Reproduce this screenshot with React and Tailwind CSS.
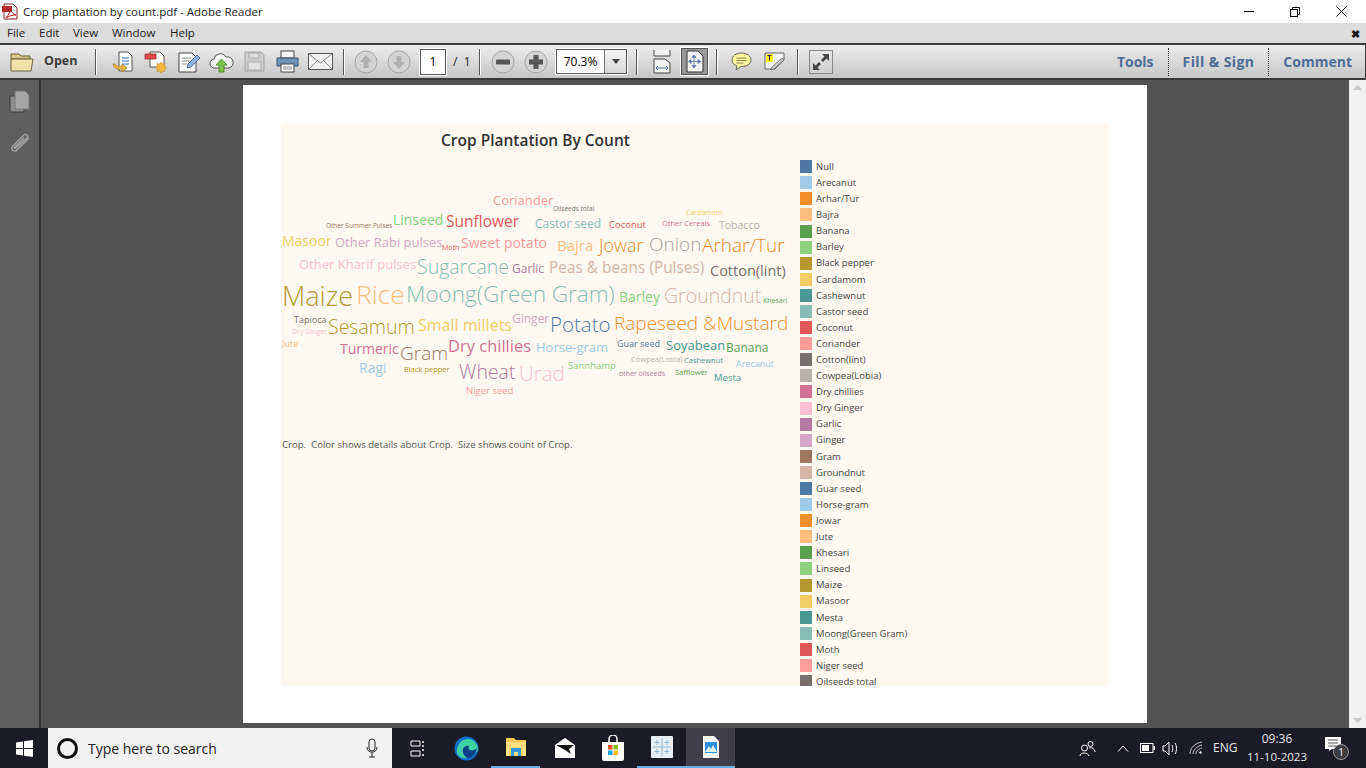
import React from 'react';

const legend = [
  ['Null', 'bg-[#4e79a7]'], ['Arecanut', 'bg-[#a0cbe8]'], ['Arhar/Tur', 'bg-[#f28e2b]'], ['Bajra', 'bg-[#ffbe7d]'],
  ['Banana', 'bg-[#59a14f]'], ['Barley', 'bg-[#8cd17d]'], ['Black pepper', 'bg-[#b6992d]'], ['Cardamom', 'bg-[#f1ce63]'],
  ['Cashewnut', 'bg-[#499894]'], ['Castor seed', 'bg-[#86bcb6]'], ['Coconut', 'bg-[#e15759]'], ['Coriander', 'bg-[#ff9d9a]'],
  ['Cotton(lint)', 'bg-[#79706e]'], ['Cowpea(Lobia)', 'bg-[#bab0ac]'], ['Dry chillies', 'bg-[#d37295]'], ['Dry Ginger', 'bg-[#fabfd2]'],
  ['Garlic', 'bg-[#b07aa1]'], ['Ginger', 'bg-[#d4a6c8]'], ['Gram', 'bg-[#9d7660]'], ['Groundnut', 'bg-[#d7b5a6]'],
  ['Guar seed', 'bg-[#4e79a7]'], ['Horse-gram', 'bg-[#a0cbe8]'], ['Jowar', 'bg-[#f28e2b]'], ['Jute', 'bg-[#ffbe7d]'],
  ['Khesari', 'bg-[#59a14f]'], ['Linseed', 'bg-[#8cd17d]'], ['Maize', 'bg-[#b6992d]'], ['Masoor', 'bg-[#f1ce63]'],
  ['Mesta', 'bg-[#499894]'], ['Moong(Green Gram)', 'bg-[#86bcb6]'], ['Moth', 'bg-[#e15759]'], ['Niger seed', 'bg-[#ff9d9a]'],
  ['Oilseeds total', 'bg-[#79706e]'],
];

const words = [
  ['Coriander', 'left-[212px] top-[10px] text-[13px] text-[#ff9d9a]'],
  ['Oilseeds total', 'left-[272px] top-[19px] text-[6.5px] text-[#79706e]'],
  ['Cardamom', 'left-[405px] top-[22px] text-[7px] text-[#f1ce63]'],
  ['Other Summer Pulses', 'left-[45px] top-[36px] text-[6.5px] text-[#9d7660]'],
  ['Linseed', 'left-[112px] top-[30px] text-[14px] text-[#8cd17d]'],
  ['Sunflower', 'left-[165px] top-[32px] text-[15.5px] text-[#e15759]'],
  ['Castor seed', 'left-[254px] top-[34px] text-[12px] text-[#86bcb6]'],
  ['Coconut', 'left-[328px] top-[35px] text-[9.5px] text-[#e15759]'],
  ['Other Cereals', 'left-[381px] top-[34px] text-[7.5px] text-[#d37295]'],
  ['Tobacco', 'left-[438px] top-[35px] text-[10.5px] text-[#bab0ac]'],
  ['Masoor', 'left-[1px] top-[51px] text-[14px] text-[#f1ce63]'],
  ['Other Rabi pulses', 'left-[54px] top-[52px] text-[13px] text-[#d4a6c8]'],
  ['Moth', 'left-[161px] top-[57px] text-[7px] text-[#e15759]'],
  ['Sweet potato', 'left-[180px] top-[53px] text-[14px] text-[#ff9d9a]'],
  ['Bajra', 'left-[276px] top-[55px] text-[15px] text-[#ffbe7d]'],
  ['Jowar', 'left-[318px] top-[55px] text-[18px] font-light text-[#f28e2b]'],
  ['Onion', 'left-[368px] top-[54px] text-[19px] font-light text-[#a8a09c]'],
  ['Arhar/Tur', 'left-[421px] top-[55px] text-[19px] font-light text-[#f28e2b]'],
  ['Other Kharif pulses', 'left-[18px] top-[74px] text-[13px] text-[#fabfd2]'],
  ['Sugarcane', 'left-[136px] top-[77px] text-[19.5px] font-light text-[#86bcb6]'],
  ['Garlic', 'left-[231px] top-[79px] text-[12px] text-[#b07aa1]'],
  ['Peas & beans (Pulses)', 'left-[268px] top-[78px] text-[15.4px] text-[#d7b5a6]'],
  ['Cotton(lint)', 'left-[429px] top-[81px] text-[14.5px] text-[#79706e]'],
  ['Maize', 'left-[1px] top-[105px] text-[27px] font-light text-[#b6992d]'],
  ['Rice', 'left-[75px] top-[104px] text-[26.5px] font-light text-[#ffbe7d]'],
  ['Moong(Green Gram)', 'left-[125px] top-[104px] text-[22.5px] font-light text-[#86bcb6]'],
  ['Barley', 'left-[338px] top-[107px] text-[14px] text-[#8cd17d]'],
  ['Groundnut', 'left-[383px] top-[106px] text-[19.5px] font-light text-[#d7b5a6]'],
  ['Khesari', 'left-[482px] top-[110px] text-[7px] text-[#59a14f]'],
  ['Tapioca', 'left-[13px] top-[129px] text-[9px] text-[#79706e]'],
  ['Sesamum', 'left-[47px] top-[137px] text-[19.5px] font-light text-[#b6992d]'],
  ['Small millets', 'left-[137px] top-[135px] text-[16px] text-[#f1ce63]'],
  ['Ginger', 'left-[231px] top-[129px] text-[12px] text-[#d4a6c8]'],
  ['Potato', 'left-[269px] top-[134px] text-[20.5px] font-light text-[#4e79a7]'],
  ['Rapeseed &Mustard', 'left-[333px] top-[133px] text-[19px] font-light text-[#f28e2b]'],
  ['Dry Ginger', 'left-[11px] top-[141px] text-[7px] text-[#fabfd2]'],
  ['Jute', 'left-[1px] top-[153px] text-[9px] text-[#ffbe7d]'],
  ['Turmeric', 'left-[59px] top-[159px] text-[14px] text-[#d37295]'],
  ['Gram', 'left-[119px] top-[163px] text-[19px] font-light text-[#9d7660]'],
  ['Dry chillies', 'left-[167px] top-[156px] text-[16.5px] text-[#d37295]'],
  ['Horse-gram', 'left-[255px] top-[157px] text-[13px] text-[#a0cbe8]'],
  ['Guar seed', 'left-[336px] top-[153px] text-[9px] text-[#4e79a7]'],
  ['Soyabean', 'left-[385px] top-[155px] text-[13px] text-[#499894]'],
  ['Banana', 'left-[445px] top-[158px] text-[12px] text-[#59a14f]'],
  ['Cowpea(Lobia)', 'left-[350px] top-[170px] text-[7.5px] text-[#bab0ac]'],
  ['Cashewnut', 'left-[403px] top-[171px] text-[7.5px] text-[#499894]'],
  ['Arecanut', 'left-[455px] top-[173px] text-[9px] text-[#a0cbe8]'],
  ['Ragi', 'left-[78px] top-[178px] text-[14px] text-[#a0cbe8]'],
  ['Black pepper', 'left-[123px] top-[180px] text-[7.5px] text-[#b6992d]'],
  ['Wheat', 'left-[178px] top-[182px] text-[19.5px] font-light text-[#b07aa1]'],
  ['Urad', 'left-[238px] top-[183px] text-[20.5px] font-light text-[#fabfd2]'],
  ['Sannhamp', 'left-[287px] top-[176px] text-[9.5px] text-[#8cd17d]'],
  ['other oilseeds', 'left-[338px] top-[183px] text-[7px] text-[#b07aa1]'],
  ['Safflower', 'left-[394px] top-[183px] text-[7.5px] text-[#59a14f]'],
  ['Mesta', 'left-[433px] top-[188px] text-[9.5px] text-[#499894]'],
  ['Niger seed', 'left-[185px] top-[201px] text-[9.5px] text-[#ff9d9a]'],
];

const Sep = ({ className }) => <div className={`w-[2px] h-[26px] bg-[#555] border-r border-white shrink-0 ${className || ''}`}></div>;

const Slot = ({ children }) => <div className="w-[33px] h-[26px] flex items-center justify-center shrink-0">{children}</div>;

const Folder = () => (
  <svg width="25" height="22" viewBox="0 0 25 22">
    <path d="M1 3h8l2 2h9v3H1z" fill="#d9c78e" stroke="#6d5f3a" />
    <path d="M1 20V8h22l-2 12z" fill="#f1e0a8" stroke="#6d5f3a" />
  </svg>
);

const DocBase = ({ children }) => (
  <svg width="24" height="24" viewBox="0 0 24 24">{children}</svg>
);

const CircleBtn = ({ children }) => (
  <svg width="24" height="24" viewBox="0 0 24 24">
    <circle cx="12" cy="12" r="11" fill="#d4d4d4" stroke="#a5a5a5" />
    {children}
  </svg>
);

const Toolbar = () => (
  <div className="h-[37px] shrink-0 flex items-center border-y-2 border-[#3a3a3a] border-r bg-gradient-to-b from-[#ededed] to-[#c6c6c6] text-[#333]">
    <div className="flex items-center w-[95px] pl-[10px] shrink-0">
      <Folder />
      <span className="ml-[9px] text-[12.5px] font-bold text-[#3c3c3c]">Open</span>
    </div>
    <Sep />
    <div className="flex ml-[9px]">
      <Slot>
        <DocBase>
          <path d="M8 2h9l4 4v15H8z" fill="#fff" stroke="#555" />
          <path d="M11 8h7M11 11h7M11 14h7" stroke="#2f6fc0" strokeWidth="1.2" />
          <path d="M2 14c1 5 5 6 9 5v3l5-4-5-4v2c-3 1-6 0-7-2z" fill="#eeb544" stroke="#a47a1d" strokeWidth=".7" />
        </DocBase>
      </Slot>
      <Slot>
        <DocBase>
          <path d="M6 2h10l4 4v11H6z" fill="#fff" stroke="#555" />
          <rect x="1" y="4" width="11" height="5" fill="#e04a4a" stroke="#9c2020" strokeWidth=".7" />
          <path d="M17 12l1.500 2 2.500-.5-.5 2.500 2 1.500-2 1.500.5 2.500-2.500-.5-1.500 2-1.500-2-2.500.5.5-2.500-2-1.500 2-1.500-.5-2.500 2.500.5z" fill="#f0b93a" stroke="#b7821a" strokeWidth=".5" />
        </DocBase>
      </Slot>
      <Slot>
        <DocBase>
          <path d="M2 3h13l4 4v15H2z" fill="#fff" stroke="#444" />
          <path d="M5 8h9M5 11h7M5 14h5" stroke="#888" />
          <path d="M10 18l1-4 9-9 3 3-9 9z" fill="#8db4dd" stroke="#41597a" strokeWidth=".8" />
        </DocBase>
      </Slot>
      <Slot>
        <svg width="25" height="22" viewBox="0 0 25 22">
          <path d="M6 17a4.500 4.500 0 0 1-1-9 6.500 6.500 0 0 1 12-2 5.500 5.500 0 0 1 3 11z" fill="#f4f4f4" stroke="#555" />
          <path d="M12.500 8l5.500 6h-3v7h-5v-7H7z" fill="#7cc24a" stroke="#3e7d22" strokeWidth=".8" />
        </svg>
      </Slot>
      <Slot>
        <svg width="21" height="21" viewBox="0 0 21 21">
          <path d="M1 1h16l3 3v16H1z" fill="#cfcfcf" stroke="#a2a2a2" />
          <rect x="5" y="2" width="10" height="5" fill="#dedede" stroke="#aaa" />
          <rect x="4" y="11" width="13" height="8" fill="#e2e2e2" stroke="#aaa" />
        </svg>
      </Slot>
      <Slot>
        <svg width="23" height="23" viewBox="0 0 23 23">
          <rect x="5" y="1" width="13" height="7" fill="#f5f5f5" stroke="#444" />
          <path d="M1 8h21v8H1z" fill="#6f93b8" stroke="#38506b" />
          <rect x="5" y="14" width="13" height="8" fill="#fff" stroke="#444" />
          <path d="M7 17h9M7 19h9" stroke="#888" />
        </svg>
      </Slot>
      <Slot>
        <svg width="25" height="17" viewBox="0 0 25 17">
          <rect x=".5" y=".5" width="24" height="16" fill="#f0f0f0" stroke="#555" />
          <path d="M1 1l11.500 9L24 1M1 16l8-8M24 16l-8-8" fill="none" stroke="#888" />
        </svg>
      </Slot>
    </div>
    <Sep className="ml-[6px]" />
    <div className="flex ml-[4px]">
      <Slot>
        <CircleBtn><path d="M12 5l6 7h-3.500v6h-5v-6H6z" fill="#b0b0b0" /></CircleBtn>
      </Slot>
      <Slot>
        <CircleBtn><path d="M12 19l6-7h-3.500V6h-5v6H6z" fill="#b0b0b0" /></CircleBtn>
      </Slot>
    </div>
    <div className="ml-[5px] w-[26px] h-[26px] border border-[#555] outline outline-1 outline-white bg-white flex items-center justify-center text-[12px] text-black shrink-0">1</div>
    <span className="ml-[7px] w-[26px] text-[12px] text-[#222] shrink-0 whitespace-pre">/  1</span>
    <Sep />
    <div className="flex ml-[5px]">
      <Slot>
        <CircleBtn><rect x="5" y="9.500" width="14" height="5" rx="1" fill="#555" /></CircleBtn>
      </Slot>
      <Slot>
        <CircleBtn><path d="M9.500 5h5v4.500H19v5h-4.500V19h-5v-4.500H5v-5h4.500z" fill="#555" /></CircleBtn>
      </Slot>
    </div>
    <div className="ml-[4px] w-[71px] h-[25px] flex border border-[#555] outline outline-1 outline-white shrink-0">
      <div className="w-[48px] bg-white flex items-center justify-center text-[12px] text-black border-r border-[#777]">70.3%</div>
      <div className="flex-1 bg-gradient-to-b from-[#f4f4f4] to-[#d6d6d6] flex items-center justify-center">
        <svg width="8" height="5" viewBox="0 0 8 5"><path d="M0 0h8L4 5z" fill="#444" /></svg>
      </div>
    </div>
    <Sep className="ml-[9px]" />
    <div className="flex ml-[7px] items-center">
      <Slot>
        <svg width="18" height="24" viewBox="0 0 18 24">
          <path d="M1 0v6h16V0" fill="#f2f2f2" stroke="#444" />
          <path d="M1 23V9h11l5 4v10z" fill="#f2f2f2" stroke="#444" />
          <path d="M3 18h12M3 18l2-2M3 18l2 2M15 18l-2-2M15 18l-2 2" stroke="#5a78ad" fill="none" />
        </svg>
      </Slot>
      <div className="w-[27px] h-[27px] ml-[3px] bg-[#999] border border-[#555] outline outline-1 outline-white flex items-center justify-center shrink-0">
        <svg width="18" height="23" viewBox="0 0 18 23">
          <path d="M1 1h11l5 5v16H1z" fill="#f4f4f4" stroke="#333" />
          <path d="M8 6v11M3 11.500h11M8 5l-2 2.500h4zM8 18l-2-2.500h4zM2.500 11.500L5 9.500v4zM14.500 11.500L12 9.500v4z" stroke="#5a78ad" fill="#5a78ad" strokeWidth=".8" />
        </svg>
      </div>
    </div>
    <Sep className="ml-[8px]" />
    <div className="flex ml-[7px]">
      <Slot>
        <svg width="21" height="20" viewBox="0 0 21 20">
          <path d="M10.500 1C5 1 1 4 1 8c0 3 2.500 5 5 6l-1 4 5-3.500h.5C16 14.500 20 12 20 8s-4-7-9.500-7z" fill="#fbf59c" stroke="#666" />
          <path d="M5.500 6h10M5.500 8.500h10M5.500 11h7" stroke="#8a8450" />
        </svg>
      </Slot>
      <Slot>
        <svg width="21" height="20" viewBox="0 0 21 20">
          <path d="M1 1h19v7L11 17H1z" fill="#f4f4f4" stroke="#666" />
          <rect x="2" y="2" width="7" height="8" fill="#f6f21a" />
          <path d="M3.500 3.500h4M5.500 3.500v5" stroke="#222" fill="none" />
          <path d="M7 18l1-3 10-9 2 2-10 9z" fill="#c7c7c7" stroke="#555" strokeWidth=".7" />
        </svg>
      </Slot>
    </div>
    <Sep className="ml-[6px]" />
    <div className="ml-[10px] w-[24px] h-[24px] bg-gradient-to-b from-[#e8e8e8] to-[#cfcfcf] border border-[#888] flex items-center justify-center shrink-0">
      <svg width="18" height="18" viewBox="0 0 18 18">
        <path d="M10 1h7v7l-2.500-2.500L11 9 9 7l3.500-3.500zM8 17H1v-7l2.500 2.500L7 9l2 2-3.500 3.500z" fill="#454545" />
      </svg>
    </div>
    <div className="ml-auto flex items-center font-bold text-[14px] text-[#4e6d96] pr-[13px]">
      <span>Tools</span>
      <div className="h-[28px] mx-[14px] border-l border-dotted border-[#333]"></div>
      <span className="tracking-[0.4px]">Fill &amp; Sign</span>
      <div className="h-[28px] mx-[14px] border-l border-dotted border-[#333]"></div>
      <span>Comment</span>
    </div>
  </div>
);

const Taskbar = () => (
  <div className="h-[40px] shrink-0 flex items-center bg-[#1b1a27] text-white">
    <div className="w-[48px] flex justify-center shrink-0">
      <svg width="17" height="17" viewBox="0 0 17 17">
        <path d="M0 2.500l7-1V8H0zM8 1.300L17 0v8H8zM0 9h7v6.500l-7-1zM8 9h9v8l-9-1.300z" fill="#fff" />
      </svg>
    </div>
    <div className="w-[344px] h-[40px] bg-[#f2f2f2] flex items-center text-[#222] shrink-0">
      <div className="ml-[9px] w-[21px] h-[21px] rounded-full border-[3px] border-[#111]"></div>
      <span className="ml-[10px] text-[14px]">Type here to search</span>
      <svg className="ml-auto mr-[14px]" width="12" height="20" viewBox="0 0 12 20" fill="none" stroke="#222">
        <rect x="3" y="1" width="6" height="12" rx="3" />
        <path d="M1 9c0 7 10 7 10 0M6 15v4M3 19h6" />
      </svg>
    </div>
    <div className="w-[50px] flex justify-center shrink-0">
      <svg width="15" height="17" viewBox="0 0 15 17" fill="none" stroke="#fff">
        <path d="M1 1h9v5H1zM1 11h9v5H1z" />
        <path d="M13 1v2M13 5v2M13 9v2M13 14v2" strokeWidth="1.500" />
      </svg>
    </div>
    <div className="flex items-stretch h-[40px]">
      <div className="w-[49px] flex items-center justify-center">
        <svg width="25" height="25" viewBox="0 0 25 25">
          <circle cx="12.500" cy="12.500" r="12" fill="#0f6fc6" />
          <path d="M3 17C2 8 9 2 15 3c6 1 9 6 9 10 0 3-3 4-6 4-3 0-5-2-4-4-4-1-6 5-1 9-5 1-9-2-10-5z" fill="#3fd2a3" />
          <path d="M9 13c1-3 4-4 6-3-1 1-1 3 1 4 3 1 5 0 7-2-1 5-4 9-9 10-4-2-6-5-5-9z" fill="#0b3f8a" />
        </svg>
      </div>
      <div className="w-[49px] flex items-center justify-center border-b-2 border-[#66aee8]">
        <svg width="22" height="22" viewBox="0 0 22 22">
          <path d="M1 2h8l2 2h10v16H1z" fill="#f4c94e" />
          <path d="M1 6h20v14H1z" fill="#ffdf7e" />
          <path d="M6 20v-8h10v8h-3v-4H9v4z" fill="#3a96dd" />
        </svg>
      </div>
      <div className="w-[49px] flex items-center justify-center">
        <svg width="22" height="22" viewBox="0 0 22 22">
          <path d="M1 8l10-7 10 7v13H1z" fill="#fff" />
          <path d="M2 8h18l-5 4 2 5-6-4z" fill="#111" />
        </svg>
      </div>
      <div className="w-[48px] flex items-center justify-center">
        <svg width="22" height="26" viewBox="0 0 22 26">
          <path d="M7 8V4a4 4 0 0 1 8 0v4" fill="none" stroke="#fff" strokeWidth="1.500" />
          <path d="M0 7h22v17a2 2 0 0 1-2 2H2a2 2 0 0 1-2-2z" fill="#fff" />
          <rect x="6" y="10" width="4.500" height="4.500" fill="#f25022" />
          <rect x="11.500" y="10" width="4.500" height="4.500" fill="#7fba00" />
          <rect x="6" y="15.500" width="4.500" height="4.500" fill="#00a4ef" />
          <rect x="11.500" y="15.500" width="4.500" height="4.500" fill="#ffb900" />
        </svg>
      </div>
      <div className="w-[49px] flex items-center justify-center border-b-2 border-[#66aee8]">
        <svg width="24" height="24" viewBox="0 0 24 24">
          <rect x="1" y="1" width="22" height="22" rx="1" fill="#e9f0f5" />
          <path d="M12 3v18M3 12h18M7 5v5M4.500 7.500h5M17 5v5M14.500 7.500h5M7 14v5M4.500 16.500h5M17 14v5M14.500 16.500h5" stroke="#8db6d2" />
        </svg>
      </div>
      <div className="w-[49px] flex items-center justify-center bg-[#3f3e4a] border-b-2 border-[#66aee8]">
        <svg width="16" height="22" viewBox="0 0 16 22">
          <path d="M0 0h11l5 5v17H0z" fill="#f6f6f6" />
          <path d="M2 6h12v11H2z" fill="#2c8ee0" />
          <path d="M2 16l4-6 2 3 2-4 4 7z" fill="#dff0fb" />
        </svg>
      </div>
    </div>
    <div className="ml-auto flex items-center h-[40px]">
      <svg className="mr-[21px]" width="17" height="17" viewBox="0 0 17 17" fill="none" stroke="#fff">
        <circle cx="5.500" cy="8" r="3" /><path d="M1 16c0-4 8-4 9 0" />
        <circle cx="11.500" cy="4" r="2.500" /><path d="M10 8c3-1 6 1 6 4" />
      </svg>
      <svg className="mr-[11px]" width="12" height="7" viewBox="0 0 12 7" fill="none" stroke="#fff"><path d="M1 6.500L6 1l5 5.500" /></svg>
      <svg className="mr-[7px]" width="15" height="10" viewBox="0 0 15 10">
        <rect x=".5" y=".5" width="12.500" height="9" fill="none" stroke="#fff" />
        <rect x="2" y="2" width="7" height="6" fill="#fff" />
        <rect x="13.500" y="3" width="1.500" height="4" fill="#fff" />
      </svg>
      <svg className="mr-[10px]" width="17" height="15" viewBox="0 0 17 15" fill="none" stroke="#fff">
        <path d="M1 5h2l4-4v13l-4-4H1z" /><path d="M10 4c1 2 1 5 0 7M13 2c2 3 2 8 0 11" />
      </svg>
      <svg className="mr-[10px]" width="14" height="14" viewBox="0 0 14 14" fill="none" stroke="#ccc">
        <path d="M1 13C1 7 6 2 13 1M4 13c0-4 4-8 9-9M7 13c0-3 2-5 6-6" /><circle cx="11.500" cy="11.500" r="1.200" fill="#fff" stroke="none" />
      </svg>
      <span className="w-[27px] text-[12px] text-[#e8e8e8]">ENG</span>
      <div className="ml-[4px] w-[66px] flex flex-col items-center text-[12px] leading-[18px] text-[#e8e8e8]">
        <span>09:36</span>
        <span className="text-[11.5px]">11-10-2023</span>
      </div>
      <div className="ml-[15px] mr-[25px] relative w-[16px] h-[20px] -translate-y-[1px]">
        <svg width="16" height="14" viewBox="0 0 16 14">
          <path d="M0 0h16v12H7l-3 2v-2H0z" fill="#fff" />
          <path d="M3 3h10M3 6h10M3 9h10" stroke="#555" />
        </svg>
        <span className="absolute left-[8px] top-[7px] w-[16px] h-[16px] rounded-full bg-[#3a3a3f] border border-[#999] flex items-center justify-center text-[10px] leading-none">1</span>
      </div>
    </div>
  </div>
);

const App = () => (
  <div className="w-[1366px] h-[768px] overflow-hidden flex flex-col bg-white font-['Open_Sans',sans-serif]">
    {/* Title bar */}
    <div className="h-[23px] shrink-0 flex items-center bg-white">
      <svg className="ml-[2px]" width="16" height="17" viewBox="0 0 16 17">
        <path d="M2 1h9l4 4v11H2z" fill="#fff" stroke="#8a2020" />
        <rect x="0" y="3" width="10" height="6" fill="#b52a2a" />
        <path d="M4 15c3-3 4-7 4-10 1 4 3 6 6 7-4 0-7 1-10 3z" fill="none" stroke="#c01818" />
      </svg>
      <span className="ml-[5px] text-[11.5px] text-[#1a1a1a]">Crop plantation by count.pdf - Adobe Reader</span>
      <div className="ml-auto flex items-center">
        <div className="w-[46px] flex justify-center -translate-x-[2px]"><div className="w-[10px] h-[1px] bg-black"></div></div>
        <div className="w-[46px] flex justify-center -translate-x-[2px]">
          <svg width="10" height="10" viewBox="0 0 10 10" fill="none" stroke="#000"><rect x=".5" y="2.500" width="7" height="7" /><path d="M2.500 2.500V.5h7v7h-2" /></svg>
        </div>
        <div className="w-[46px] flex justify-center -translate-x-[2px]">
          <svg width="11" height="11" viewBox="0 0 11 11" stroke="#000"><path d="M.5.5l10 10M10.500.5l-10 10" /></svg>
        </div>
      </div>
    </div>

    {/* Menu bar */}
    <div className="h-[20px] shrink-0 flex items-center bg-[#dcdcdc] text-[11.5px] text-[#1a1a1a] pl-[7px]">
      <span className="w-[32px]">File</span>
      <span className="w-[34px]">Edit</span>
      <span className="w-[39px]">View</span>
      <span className="w-[58px]">Window</span>
      <span>Help</span>
      <span className="ml-auto mr-[6px] text-[11px] font-bold leading-none">✖</span>
    </div>

    <Toolbar />

    {/* Document area */}
    <div className="flex-1 min-h-0 flex bg-[#535353]">
      <div className="w-[41px] shrink-0 bg-[#5f5f5f] border-r-2 border-[#333] flex flex-col items-center pt-[10px] gap-[19px]">
        <svg width="21" height="23" viewBox="0 0 21 23">
          <rect x="1" y="6" width="14" height="16" fill="#8c8c8c" stroke="#3f3f3f" />
          <path d="M6 1h10l4 4v14H6z" fill="#a6a6a6" stroke="#777" />
        </svg>
        <svg width="22" height="23" viewBox="0 0 22 23" fill="none" stroke="#a2a2a2" strokeWidth="1.500">
          <path d="M20 6L8 18c-3 3-7-1-4-4L15 3c2-2 5 1 3 3L7 16c-1 1-2 0-1-1l9-9" />
        </svg>
      </div>
      <div className="flex-1 min-w-0 flex justify-center pt-[5px]">
        <div className="w-[904px] h-[638px] bg-white p-[38px] shrink-0">
          <div className="h-[563px] flex overflow-hidden bg-[#fff9f1]">
            <div className="w-[519px] shrink-0">
              <div className="h-[67px] pt-[6px] pl-[160px] text-[15.5px] font-semibold text-[#333] whitespace-nowrap">Crop Plantation By Count</div>
              {/* word cloud, every word sits at its own spot */}
              <div className="relative h-[240px]">
                {words.map(([t, c]) => (
                  <span key={t} className={`absolute -translate-y-1/2 leading-none whitespace-nowrap ${c}`}>{t}</span>
                ))}
              </div>
              <div className="mt-[8px] pl-[1px] text-[9.6px] text-[#555] whitespace-pre">Crop.  Color shows details about Crop.  Size shows count of Crop.</div>
            </div>
            <div className="pt-[35.6px] flex flex-col">
              {legend.map(([name, bg]) => (
                <div key={name} className="h-[16.1px] flex items-center shrink-0">
                  <div className={`w-[12px] h-[13px] ${bg}`}></div>
                  <span className="ml-[4px] text-[9.500px] leading-none text-[#444] whitespace-nowrap">{name}</span>
                </div>
              ))}
            </div>
          </div>
        </div>
      </div>
      <div className="w-[17px] shrink-0 bg-[#f0f0f0] flex flex-col items-center justify-between py-[5px]">
        <svg width="9" height="5" viewBox="0 0 9 5"><path d="M4.500 0L9 5H0z" fill="#c8c8c8" /></svg>
        <svg width="9" height="5" viewBox="0 0 9 5"><path d="M4.500 5L9 0H0z" fill="#c8c8c8" /></svg>
      </div>
    </div>

    <Taskbar />
  </div>
);

export default App;
